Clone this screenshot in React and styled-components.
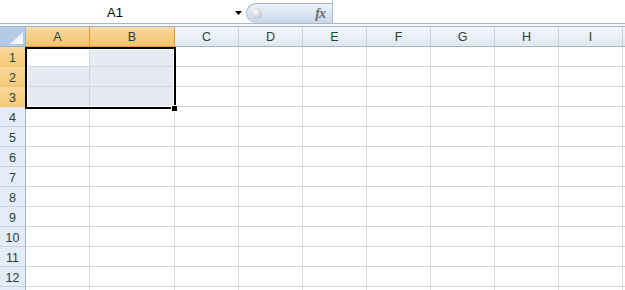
import React from "react";
import styled, { createGlobalStyle } from "styled-components";

const GlobalStyle = createGlobalStyle`
  html, body { margin: 0; padding: 0; background: #ffffff; }
  body { font-family: "Liberation Sans", Arial, sans-serif; }
`;

const Wrapper = styled.div`
  width: 625px;
  height: 290px;
  overflow: hidden;
  background: #ffffff;
  display: flex;
  flex-direction: column;
`;

const FormulaBar = styled.div`
  display: flex;
  height: 24px;
  box-sizing: border-box;
  border-bottom: 1px solid #a9b8cb;
  background: #ffffff;
  flex-shrink: 0;
`;

const NameBox = styled.div`
  display: flex;
  align-items: center;
  width: 246px;
  flex-shrink: 0;
`;

const NameText = styled.div`
  width: 230px;
  text-align: center;
  font-size: 13px;
  color: #000;
  padding-top: 1px;
`;

const Arrow = styled.div`
  width: 16px;
  display: flex;
  justify-content: center;
  padding-top: 2px;
`;

const FxButton = styled.div`
  width: 86px;
  margin-top: 3px;
  height: 20px;
  box-sizing: border-box;
  border: 1px solid #a3b4cb;
  border-right: none;
  border-bottom: none;
  border-radius: 11px 0 0 11px;
  background: linear-gradient(#eef3fa 0%, #dbe5f3 50%, #c9d7ea 100%);
  display: flex;
  align-items: center;
  justify-content: space-between;
  padding: 0 7px 0 4px;
  flex-shrink: 0;
`;

const Knob = styled.div`
  width: 11px;
  height: 11px;
  border-radius: 50%;
  background: radial-gradient(circle at 40% 35%, #ffffff 0%, #d9dde3 45%, #a9afb8 100%);
`;

const FxText = styled.span`
  font-family: "Liberation Serif", "Times New Roman", serif;
  font-style: italic;
  font-weight: bold;
  font-size: 14px;
  color: #6b6b6b;
  letter-spacing: -1px;
`;

const FormulaInput = styled.div`
  flex: 1;
  border-left: 1px solid #a9b8cb;
  background: #ffffff;
`;

const Band = styled.div`
  height: 2px;
  background: #f3f6fa;
  flex-shrink: 0;
`;

const GridArea = styled.div`
  position: relative;
  display: grid;
  grid-template-columns: 26px 64px 85px repeat(8, 64px);
  grid-template-rows: 21px;
  grid-auto-rows: 20px;
  align-content: start;
  flex: 1;
  overflow: hidden;
`;

const Corner = styled.div`
  box-sizing: border-box;
  border-top: 1px solid #9eb6ce;
  border-right: 1px solid #9eb6ce;
  border-bottom: 1px solid #9eb6ce;
  background: #b6cae6;
  display: flex;
  align-items: flex-end;
  justify-content: flex-end;
  padding: 0 2px 2px 0;
`;

const ColHeader = styled.div`
  box-sizing: border-box;
  border-top: 1px solid #9eb6ce;
  border-right: 1px solid ${(p) => (p.$selected ? "#f29536" : "#c5d2e2")};
  border-bottom: 1px solid ${(p) => (p.$selected ? "#f29536" : "#9eb6ce")};
  background: ${(p) =>
    p.$selected
      ? "linear-gradient(#f9dba4 0%, #f6cf85 50%, #f2c46a 100%)"
      : "linear-gradient(#f7f9fc 0%, #ebeff6 50%, #e0e7f0 100%)"};
  display: flex;
  align-items: center;
  justify-content: center;
  font-size: 12.5px;
  color: #27413e;
  padding-top: 1px;
`;

const RowHeader = styled.div`
  box-sizing: border-box;
  border-right: 1px solid ${(p) => (p.$selected ? "#f29536" : "#9eb6ce")};
  border-bottom: 1px solid ${(p) => (p.$selected ? "#f6c57c" : "#c5d2e2")};
  background: ${(p) =>
    p.$selected ? "linear-gradient(#f9d89c, #f5ca78)" : "#e4ecf7"};
  display: flex;
  align-items: center;
  justify-content: center;
  font-size: 12.5px;
  color: #27413e;
  padding-top: 2px;
`;

const Cell = styled.div`
  box-sizing: border-box;
  border-right: 1px solid #d0d7e5;
  border-bottom: 1px solid #d0d7e5;
  background: ${(p) => (p.$fill ? "#e7e9f3" : "#ffffff")};
`;

const Selection = styled.div`
  position: absolute;
  left: 25px;
  top: 21px;
  width: 151px;
  height: 62px;
  box-sizing: border-box;
  border: 2px solid #000;
  box-shadow: inset 0 0 0 1px #ffffff;
  pointer-events: none;
`;

const FillHandle = styled.div`
  position: absolute;
  left: 171px;
  top: 79px;
  width: 5px;
  height: 5px;
  background: #000;
  border: 1px solid #ffffff;
`;

const columns = ["A", "B", "C", "D", "E", "F", "G", "H", "I"];
const selectedCols = ["A", "B"];
const rows = Array.from({ length: 12 }, (_, i) => i + 1);

export default function App() {
  return (
    <>
      <GlobalStyle />
      <Wrapper>
        <FormulaBar>
          <NameBox>
            <NameText>A1</NameText>
            <Arrow>
              <svg width="7" height="4" viewBox="0 0 7 4">
                <path d="M0 0 H7 L3.5 4 Z" fill="#000" />
              </svg>
            </Arrow>
          </NameBox>
          <FxButton>
            <Knob />
            <FxText>fx</FxText>
          </FxButton>
          <FormulaInput />
        </FormulaBar>
        <Band />
        <GridArea>
          <Corner>
            <svg width="13" height="12" viewBox="0 0 13 12">
              <defs>
                <linearGradient id="tri" x1="0" y1="0" x2="1" y2="1">
                  <stop offset="0" stopColor="#dfe9f6" />
                  <stop offset="1" stopColor="#ffffff" />
                </linearGradient>
              </defs>
              <path d="M13 0 V12 H0 Z" fill="url(#tri)" />
            </svg>
          </Corner>
          {columns.map((c) => (
            <ColHeader key={c} $selected={selectedCols.includes(c)}>
              {c}
            </ColHeader>
          ))}
          <ColHeader />
          {rows.map((r) => (
            <React.Fragment key={r}>
              <RowHeader $selected={r <= 3}>{r}</RowHeader>
              {columns.map((c) => (
                <Cell
                  key={c}
                  $fill={r <= 3 && selectedCols.includes(c) && !(r === 1 && c === "A")}
                />
              ))}
              <Cell />
            </React.Fragment>
          ))}
          <RowHeader />
          {columns.map((c) => (
            <Cell key={c} />
          ))}
          <Cell />
          <Selection />
          <FillHandle />
        </GridArea>
      </Wrapper>
    </>
  );
}
